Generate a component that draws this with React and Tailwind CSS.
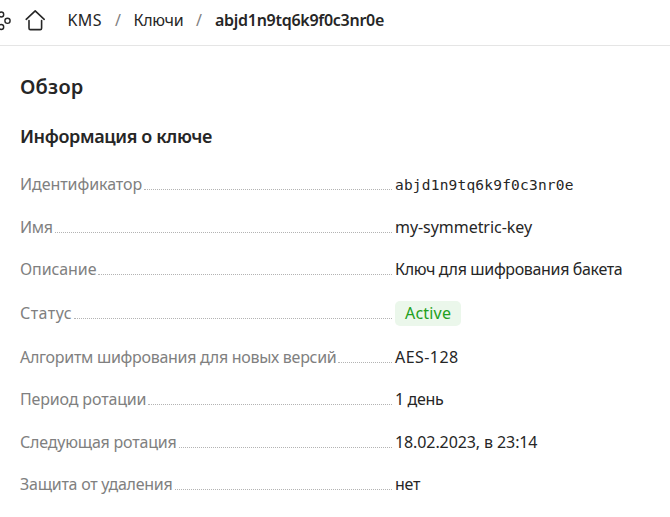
const rows = [
  { label: "Идентификатор", value: "abjd1n9tq6k9f0c3nr0e", height: "h-[43px]", track: "tracking-[-0.06px]", valueClass: "pt-[1px] font-['DejaVu_Sans_Mono',monospace] text-[14.5px] tracking-[0.2px]" },
  { label: "Имя", value: "my-symmetric-key", height: "h-[42px]", track: "tracking-[-0.3px]", valueClass: "tracking-[-0.05px]" },
  { label: "Описание", value: "Ключ для шифрования бакета", height: "h-[44px]", track: "tracking-[-0.1px]", valueClass: "tracking-[-0.35px]" },
  { label: "Статус", value: "Active", badge: true, height: "h-[44px]", track: "tracking-[0.45px]" },
  { label: "Алгоритм шифрования для новых версий", value: "AES-128", height: "h-[42px]", track: "tracking-[-0.29px]", valueClass: "tracking-[0.45px]" },
  { label: "Период ротации", value: "1 день", height: "h-[43px]", track: "tracking-[-0.15px]", valueClass: "tracking-[-0.35px]" },
  { label: "Следующая ротация", value: "18.02.2023, в 23:14", height: "h-[42px]", track: "tracking-[-0.2px]", valueClass: "tracking-[-0.1px]" },
  { label: "Защита от удаления", value: "нет", height: "h-[42px]", track: "tracking-[-0.25px]", valueClass: "tracking-[-0.2px]" },
];

function CloudIcon() {
  return (
    <svg className="h-[22px] w-[12px] shrink-0" viewBox="0 0 12 22" fill="none" stroke="#262626" strokeWidth="1.4">
      <circle cx="1.2" cy="5.5" r="2.5" />
      <circle cx="7.5" cy="11.8" r="2.6" />
      <circle cx="1.2" cy="18" r="2.5" />
    </svg>
  );
}

function HomeIcon() {
  return (
    <svg className="ml-[13px] h-[22px] w-[20px] shrink-0" viewBox="0 0 20 22" fill="none" stroke="#262626" strokeWidth="1.6" strokeLinecap="round" strokeLinejoin="round">
      <path d="M1.2 10.3 L10.2 1.8 L19.2 10.3" />
      <path d="M4 11.6 V19.2 Q4 20.6 5.4 20.6 H15.2 Q16.6 20.6 16.6 19.2 V11.6" />
    </svg>
  );
}

export default function App() {
  return (
    <div className="h-[517px] w-[670px] overflow-hidden bg-white font-['Noto_Sans',sans-serif] text-[16px] leading-[22px] text-[#262626]">
      <header className="flex h-[46px] items-start border-b border-[#e5e5e5] pt-[9px] whitespace-nowrap">
        <CloudIcon />
        <HomeIcon />
        <nav className="ml-[22px] flex">
          <span className="w-[48px] pl-[0.5px] tracking-[0.4px]">KMS</span>
          <span className="w-[18px] text-[#808080]">/</span>
          <span className="w-[63px] pl-[0.5px] tracking-[-0.3px]">Ключи</span>
          <span className="w-[18px] text-[#808080]">/</span>
          <span className="pl-[1px] font-semibold tracking-[-0.28px]">abjd1n9tq6k9f0c3nr0e</span>
        </nav>
      </header>
      <main className="pl-[20px]">
        <h1 className="pt-[27px] text-[20px] leading-[28px] font-semibold tracking-[0.2px]">Обзор</h1>
        <h2 className="mt-[23px] text-[18px] leading-[24px] font-semibold tracking-[-0.38px]">Информация о ключе</h2>
        <dl className="mt-[25px]">
          {rows.map((row) => (
            <div key={row.label} className={`flex items-start whitespace-nowrap ${row.height}`}>
              <dt className="flex w-[375px] items-start pr-[3px] text-[#808080]">
                <span className={row.track}>{row.label}</span>
                <span className="ml-[2px] h-[17px] flex-1 border-b border-dotted border-[#b3b3b3]" />
              </dt>
              {row.badge ? (
                <dd className="-mt-[1px] h-[25px] rounded-[5px] bg-[#ebf7eb] px-[10px] pt-[1px] tracking-[0.2px] text-[#22a020]">{row.value}</dd>
              ) : (
                <dd className={row.valueClass}>{row.value}</dd>
              )}
            </div>
          ))}
        </dl>
      </main>
    </div>
  );
}
